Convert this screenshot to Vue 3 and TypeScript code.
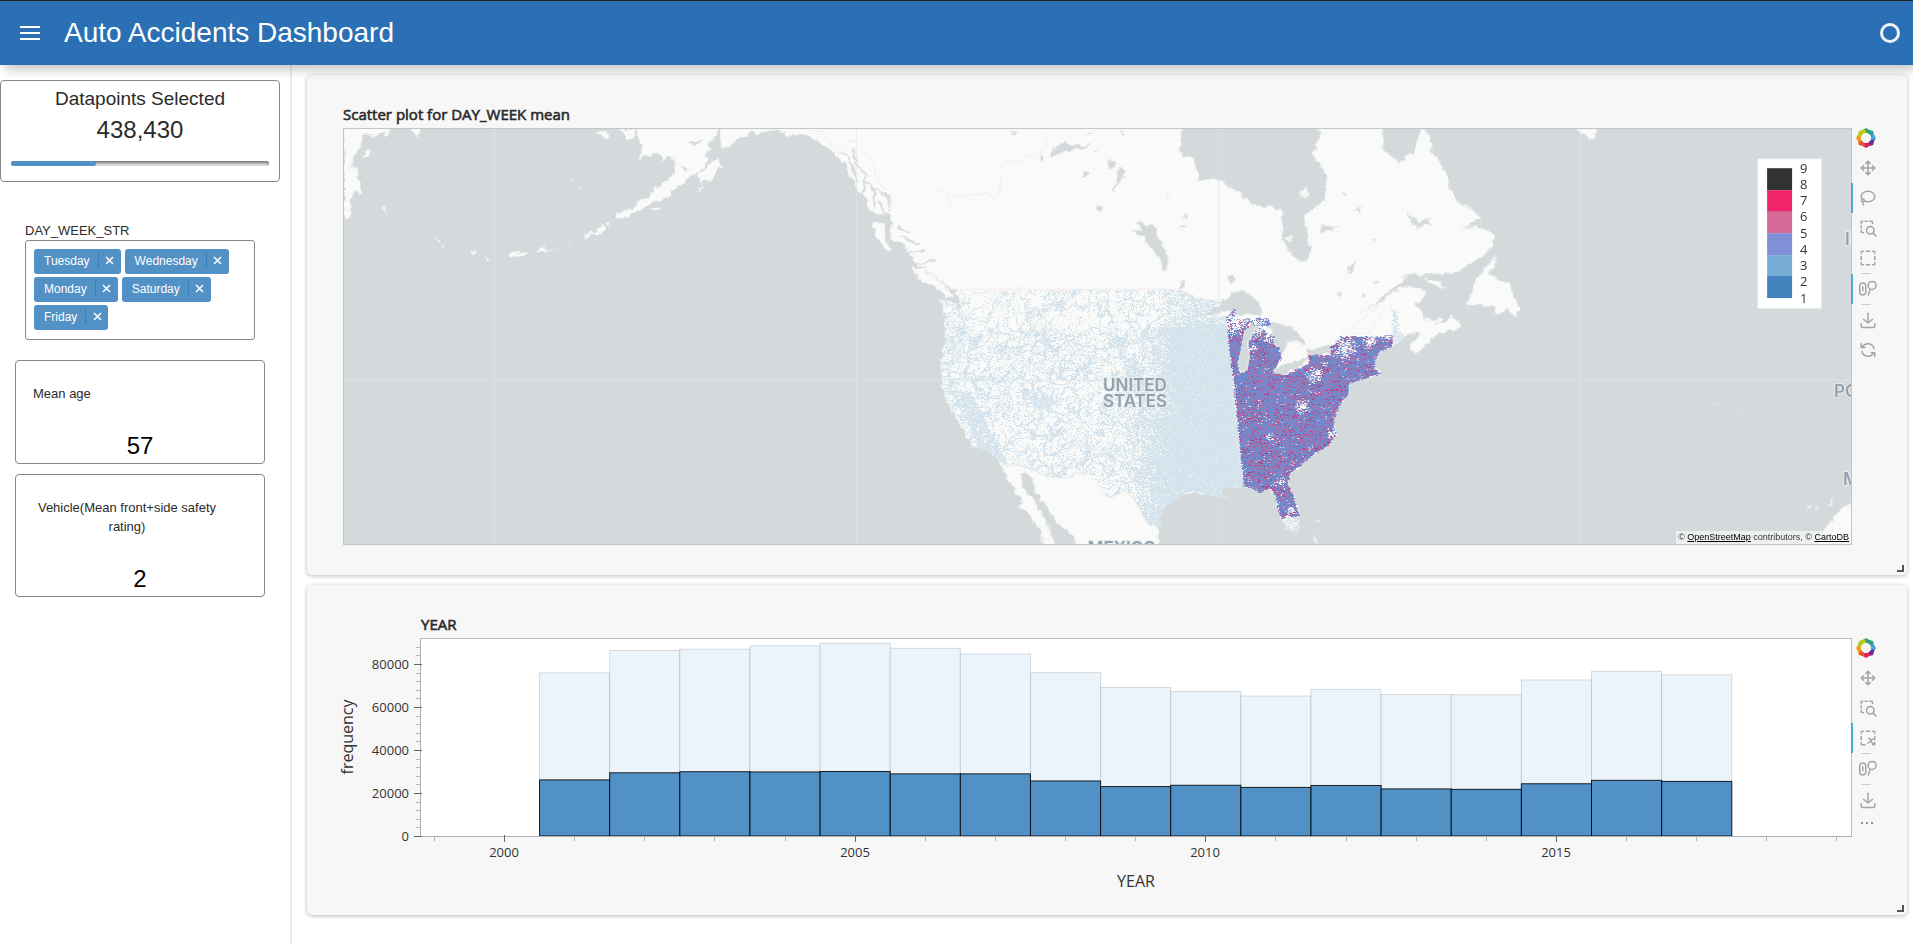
<script setup lang="ts">
import { onMounted, ref } from 'vue'

interface Tool { name: string; icon: string; active?: boolean; rule?: boolean }

const days = ref<string[]>(['Tuesday', 'Wednesday', 'Monday', 'Saturday', 'Friday'])
const removeDay = (day: string): void => { days.value = days.value.filter(d => d !== day) }

const icons: Record<string, string> = {
  pan: 'M18 9l3 3l-3 3M3 12h18M6 9l-3 3l3 3M9 18l3 3l3 -3M12 3v18M15 6l-3 -3l-3 3',
  lasso: 'M4 13.2C3.400 12.300 3 11.200 3 10c0-3.900 4-7 9-7s9 3.100 9 7s-4 7-9 7c-1.900 0-3.700-.5-5.100-1.300M5 13a2 2 0 1 0 0 4a2 2 0 1 0 0-4M5 17c0 1.400.3 2.800 1 4',
  boxZoom: 'M3 6V4a1 1 0 0 1 1-1h1M8 3h3M14 3h3a1 1 0 0 1 1 1v2M3 9v3M3 15v2a1 1 0 0 0 1 1h2M15 10a5 5 0 1 0 0 10a5 5 0 1 0 0-10M18.500 18.500L22.500 22.500',
  boxSelect: 'M3 6V4a1 1 0 0 1 1-1h2M10 3h4M18 3h2a1 1 0 0 1 1 1v2M21 10v4M21 18v2a1 1 0 0 1-1 1h-2M14 21h-4M6 21H4a1 1 0 0 1-1-1v-2M3 14v-4',
  xSelect: 'M3 6V4a1 1 0 0 1 1-1h2M10 3h4M18 3h2a1 1 0 0 1 1 1v2M21 10v4M21 18v2a1 1 0 0 1-1 1h-2M8 21H4a1 1 0 0 1-1-1v-2M3 14v-4M13 13q2-1 3 2l1 3q1 2 3 1M19 13l-7 6',
  wheelZoom: 'M1 8a4 4 0 0 1 8 0v8a4 4 0 0 1-8 0zM5 9v5M17.500 2a5 5 0 1 0 0 10.500a5 5 0 1 0 0-10.500M15 12l-2.500 8',
  save: 'M3 17v3a2 2 0 0 0 2 2h14a2 2 0 0 0 2-2v-3M6 11l6 5l6-5M12 3v13',
  reset: 'M20 10A8.400 8.400 0 0 0 4.500 8M3 3.500v5h5M4 14a8.400 8.400 0 0 0 15.500 2M21 20.500v-5h-5',
}

const mapTools: Tool[] = [
  { name: 'Pan', icon: 'pan' },
  { name: 'Lasso Select', icon: 'lasso', active: true },
  { name: 'Box Zoom', icon: 'boxZoom' },
  { name: 'Box Select', icon: 'boxSelect' },
  { name: 'Wheel Zoom', icon: 'wheelZoom', active: true, rule: true },
  { name: 'Save', icon: 'save', rule: true },
  { name: 'Reset', icon: 'reset' },
]
const yearTools: Tool[] = [
  { name: 'Pan', icon: 'pan' },
  { name: 'Box Zoom', icon: 'boxZoom' },
  { name: 'Box Select (x-axis)', icon: 'xSelect', active: true },
  { name: 'Wheel Zoom', icon: 'wheelZoom', rule: true },
  { name: 'Save', icon: 'save', rule: true },
]
const petals = ['#3fa34d', '#2f9e8f', '#43a6de', '#6f2c8b', '#e2205f', '#e4572e', '#f59c1c', '#b4cc22']

/* ---- histogram ---- */
const total = [75900, 86300, 86900, 88500, 89700, 87300, 84700, 76000, 69100, 67200, 65100, 68200, 65800, 65700, 72600, 76600, 75000]
const chosen = [26100, 29400, 29900, 29800, 30000, 28900, 28900, 25600, 23000, 23600, 22600, 23500, 21900, 21700, 24300, 25900, 25400]
const yearX = (year: number): number => 161.5 + (year - 2000) * 70.13
const freqY = (v: number): number => 236 - v * 0.00215
const majorY = [0, 20000, 40000, 60000, 80000]
const minorY = Array.from({ length: 23 }, (_, i) => i * 4000)
const majorX = [2000, 2005, 2010, 2015]
const minorX = Array.from({ length: 21 }, (_, i) => 1999 + i)

/* ---- map ---- */
const scale = ['#323232', '#f2246c', '#d66b98', '#8090d8', '#77acd6', '#4482be']

const aleutians = 'M107 140H220L212 168L203 174L206 150L180 166L168 158L150 172L147 200L126 232L121 264L142 268L136 296L147 322L143 347L132 326L118 365L122 405L107 412ZM150 234L158 212L172 206L168 220ZM197 376L206 384L212 404ZM228 400L239 410M725 154L757 158L752 174L738 172ZM780 146L818 146L815 172L803 176L792 160ZM268 146H292L285 168Z'
const alaska = 'M822 140L830 175L838 195L829 232L853 226L862 216L880 222L893 240L899 226L917 232L919 280L893 306L862 334L860 350L826 366L812 388L778 402L774 415L800 405L838 382L868 362L898 352L905 333L934 316L948 290L975 274L999 240L988 222L1003 206L999 186L1018 168L1024 140ZM975 288L990 272L1003 248L1022 236L1029 256L1016 272L1010 292L991 300L984 312ZM1036 140L1028 192L1041 204L1058 190L1070 172L1094 168L1098 150L1118 160L1130 150L1170 150L1196 165L1240 163L1270 180L1285 196L1306 218L1334 246L1342 282L1366 318L1370 338L1382 345L1397 388L1418 402L1440 396L1455 410L1452 440L1470 465L1482 494L1502 510L1505 545L1530 564L1568 596L1600 600V140ZM1402 430L1428 430L1430 478L1443 514L1421 484ZM695 475L706 456L718 458L704 472ZM718 460L740 434L748 445L734 460ZM512 518L552 518L548 526L514 526ZM575 512L592 498L595 508L611 510ZM329 475L342 480L336 484ZM420 520L430 513L424 522ZM448 530L464 536L460 540ZM750 430L760 424L758 432ZM862 382L880 384L870 390ZM974 326L986 320L978 328ZM666 296L671 299M678 322L685 324M620 501L626 503M656 490L662 488M346 496L352 498'
const mainland = 'M-20 80H690L686 150L695 168L718 170L725 200L735 243L770 235L800 250L830 280L850 300L880 320L905 318L932 330L937 370L935 415L950 445L968 470L985 488L1003 470L1008 440L998 400L990 345L1020 325L1040 295L1048 270L1046 225L1030 190L1008 165L1020 140L1030 110L1025 80H1180L1187 110L1183 145L1195 160L1210 175L1223 193L1245 170L1258 160L1265 130L1275 105L1283 85L1292 100L1302 125L1305 155L1320 180L1330 205L1342 235L1345 265L1360 290L1375 315L1395 325L1410 340L1423 352L1395 375L1370 398L1400 380L1430 385L1455 400L1455 440L1430 465L1400 485L1370 515L1330 520L1290 522L1240 522L1232 545L1205 565L1170 605L1120 650L1174 610L1205 575L1240 560L1275 562L1290 575L1285 595L1265 610L1277 640L1290 660L1315 675L1340 665L1350 645L1375 668L1370 685L1320 700L1295 725L1270 758L1256 755L1250 735L1265 715L1280 700L1262 695L1240 705L1232 715L1205 740L1175 760L1163 780L1165 800L1180 820L1165 828L1140 830L1100 850L1098 880L1085 905L1075 925L1060 960L1070 1000L1055 1030L1020 1055L990 1085L955 1120L950 1150L965 1190L978 1240L978 1290L965 1300L950 1285L935 1255L925 1225L922 1190L905 1165L880 1178L860 1160L800 1160L780 1175L800 1190L760 1185L720 1172L690 1180L660 1210L635 1240L632 1280V1340H435L425 1310L400 1285L375 1255L355 1210L330 1170L328 1140L310 1118L293 1120L300 1160L325 1200L345 1240L362 1275L378 1340H352L345 1290L325 1260L310 1240L285 1220L300 1205L280 1170L265 1135L245 1095L240 1075L210 1050L180 1040L165 1010L150 985L140 950L115 910L105 860L100 800L108 740L112 680L105 620L98 598L130 605L145 630L148 600L135 568L120 560L100 540L60 500L30 470L10 430L-20 420ZM25 500L55 505L85 530L110 555L132 590L115 590L80 560L45 535Z'
const atlantic = 'M255 505L285 470L290 480L270 520L300 545L330 550L340 580L350 600L358 625L345 652L335 635L325 625L285 645L290 620L240 615L205 615L200 605L215 580L235 530ZM75 538L100 536L140 562L120 562ZM78 650L105 662L130 658L122 668L95 670ZM536 84H592L590 103L572 115L560 103L540 98ZM1253 1340L1280 1290L1310 1245L1332 1220L1360 1211V1340ZM1224 1222L1238 1215L1230 1224ZM1285 1222L1304 1196L1296 1215ZM1248 1222L1258 1226L1254 1230ZM934 916L944 918L956 916M1007 940L1022 944M1215 1090L1228 1094M873 891L878 893'
const lakes = 'M745 650L770 620L805 592L830 570L855 578L870 600L885 615L885 650L850 640L830 650L812 632L790 640ZM885 675L860 672L840 690L833 740L826 790L835 818L850 810L856 770L854 725L868 695ZM895 668L940 672L965 685L985 712L996 738L975 722L950 722L946 745L938 765L928 740L915 735L915 705ZM915 812L940 792L1000 772L985 795L940 825L920 824ZM998 768L1000 752L1035 742L1060 728L1056 760L1030 768ZM365 165L378 145L400 125L430 136L466 136L466 142L430 146L400 155L372 172ZM605 380L620 362L635 420L656 468L655 508L645 514L640 480L606 432L600 408L572 398L570 390L592 392L580 365L590 362ZM512 184L522 176L527 190L514 208ZM540 198L553 210L545 240L522 275L519 268L532 248L530 222ZM443 232L450 216L463 214L460 226ZM480 320L497 318L488 334ZM688 358L706 340L704 350ZM684 376L704 380L690 386ZM803 528L812 520L820 542L810 552ZM340 166L352 172L348 186ZM1098 528L1100 500L1118 480L1112 500ZM1028 385L1048 372L1052 380L1082 374L1060 385L1062 396L1046 390L1030 400ZM1242 328L1248 345L1270 365L1280 362L1300 350L1292 366L1312 372L1290 378L1272 376L1270 394L1262 372L1246 355ZM460 110L466 94L470 100ZM540 86L548 102L542 106ZM270 95L286 92L278 102ZM330 822L346 850L338 850ZM690 540L698 560L684 568ZM1160 545L1176 542L1168 554ZM1082 274L1098 286L1090 290ZM1106 334L1130 320L1126 330ZM1158 414L1166 418L1162 424ZM655 280L662 284L656 288ZM470 152L486 142L480 150ZM1070 584L1084 578L1082 588ZM1130 578L1142 582L1136 592Z'
const isles = 'M978 290L985 268L998 262L1003 278L992 292ZM940 412L950 404L964 414L955 424ZM1005 1264L1030 1260L1036 1284L1032 1268ZM1014 1300L1022 1322L1018 1328ZM1056 1320L1072 1328'

const west = 'M140 568H690L720 590L750 598L785 602L745 650L800 645L805 730L842 1160H800L780 1175L800 1190L760 1185L720 1172L690 1180L660 1210L635 1240L640 1280L605 1272L570 1192L552 1176L530 1182L520 1195L500 1185L490 1155L460 1120H425L420 1132H365L295 1098H250L240 1075L210 1050L180 1040L165 1010L150 985L140 950L115 910L105 860L100 800L108 740L112 680L105 620L98 598L130 605L145 630Z'
const maine = 'M1206 740L1206 640L1200 625L1218 628L1224 690L1238 712ZM936 1250H976L980 1285L972 1305L958 1300L945 1280Z'
const east = 'M799 650L818 625L824 640L815 655L850 655L898 652L912 674L885 682L900 700L915 705V735L928 740L933 775L912 815L940 825L965 812L1000 792V764H1055L1054 740L1080 708H1170L1206 700V740L1175 752L1163 780L1162 805L1180 820L1140 832L1100 850L1098 880L1080 910L1065 950L1062 985L1070 1000L1050 1035L1020 1055L990 1085L955 1120L950 1150L965 1190L978 1248L944 1246L943 1256L932 1252L925 1225L922 1190L905 1162L880 1178L860 1160L842 1158L818 860L806 740Z'
const lakeMichigan = 'M885 675L860 676L842 690L835 740L826 790L832 818L850 810L856 770L854 725L868 695Z'

const dots = ref<HTMLCanvasElement | null>(null)

function hash(x: number, y: number, seed: number): number {
  let h = Math.imul(x, 374761393) + Math.imul(y, 668265263) + Math.imul(seed, 974634777)
  h = Math.imul(h ^ (h >>> 13), 1274126177)
  h = Math.imul(h ^ (h >>> 15), 2246822519)
  return ((h ^ (h >>> 16)) >>> 0) / 4294967296
}
function noise(x: number, y: number, seed: number): number {
  const xi = Math.floor(x), yi = Math.floor(y)
  const fx = x - xi, fy = y - yi
  const u = fx * fx * (3 - 2 * fx), v = fy * fy * (3 - 2 * fy)
  const a = hash(xi, yi, seed), b = hash(xi + 1, yi, seed)
  const c = hash(xi, yi + 1, seed), d = hash(xi + 1, yi + 1, seed)
  return a + (b - a) * u + (c - a) * v + (a - b - c + d) * u * v
}

function westDensity(px: number, py: number, bx: number, by: number): number {
  const warp = noise(px / 9, py / 9, 4) * 9
  const road = (size: number, seed: number, width: number): boolean =>
    Math.abs(noise((px + warp) / size, (py - warp) / size, seed) - 0.5) < width
  let d = 0.06 + noise(px / 14, py / 14, 9) ** 2 * 0.3 + noise(px / 5, py / 5, 14) ** 4 * 0.6
  if (road(20, 1, 0.03) || road(13, 2, 0.036) || road(9, 3, 0.034)) d = Math.max(d, 0.9)
  const start = by > 950 ? 530 : by < 680 ? 620 : 570
  d += Math.max(0, Math.min(0.92, (bx - start) / 140))
  const plains = noise(px / 11, py / 11, 40)
  if (by < 690 && plains < 0.6) d -= 0.2
  if (bx < 155 && by < 800) d += 0.4 * noise(px / 8, py / 8, 5)
  const valley = Math.abs((by - 880) * 0.42 - (bx - 150))
  if (by > 870 && by < 1090 && valley < 24) d += 0.8
  return Math.min(0.86 + 0.12 * Math.min(1, Math.max(0, (bx - 560) / 110)) - (by < 670 ? 0.22 : 0), d)
}

const gaps: [number, number, number][] = [[1088, 742, 18], [1016, 826, 12], [985, 918, 11], [930, 1146, 8], [820, 665, 22], [868, 668, 22], [1150, 722, 12], [1190, 690, 16], [902, 712, 8], [905, 1010, 6], [960, 1230, 7], [864, 742, 6], [1060, 1005, 8], [1040, 790, 5]]

onMounted(() => {
  const canvas = dots.value
  const ctx = canvas?.getContext('2d')
  if (!canvas || !ctx) return
  const areaWest = new Path2D(west)
  const areaPale = new Path2D(maine)
  const areaEast = new Path2D(east)
  const lake = new Path2D(lakeMichigan)
  const colours = ['#6f8cd1', '#b567a0', '#c32d78', '#5a98cf']
  for (let py = 150; py < 417; py++) {
    for (let px = 592; px < 1085; px++) {
      const bx = (px - 557) * 2.45
      const by = (py + 28) * 3
      const r = hash(px, py, 7)
      const jx = bx + (hash(px, py, 21) - 0.5) * 5
      const jy = by + (hash(px, py, 22) - 0.5) * 5
      if (ctx.isPointInPath(areaEast, jx, jy) && !ctx.isPointInPath(lake, bx, by)) {
        let keep = 0.95 + noise(px / 5, py / 5, 12) * 0.08
        for (const [gx, gy, gr] of gaps) {
          const dist = Math.hypot(bx - gx, (by - gy) * 0.82) / gr
          if (dist < 2) keep = Math.min(keep, 0.16 + dist * 0.42)
        }
        if (r > keep) continue
        const k = hash(px, py, 8) + (noise(px / 8, py / 8, 30) - 0.5) * 0.45
        ctx.fillStyle = k < 0.6 ? colours[0] : k < 0.87 ? colours[1] : k < 0.96 ? colours[2] : colours[3]
        ctx.fillRect(px, py, 1, 1)
      } else if (ctx.isPointInPath(areaWest, jx, jy) && r < westDensity(px, py, bx, by)) {
        ctx.fillStyle = '#d5e3ed'
        ctx.fillRect(px, py, 1, 1)
      } else if (ctx.isPointInPath(areaPale, jx, jy) && r < 0.55) {
        ctx.fillStyle = '#d0dfeb'
        ctx.fillRect(px, py, 1, 1)
      }
    }
  }
})
</script>

<template>
  <div class="app">
    <header class="bar">
      <button class="menu" type="button" aria-label="Toggle sidebar"><span></span><span></span><span></span></button>
      <h1>Auto Accidents Dashboard</h1>
      <span class="busy" role="status" aria-label="Idle"></span>
    </header>

    <div class="body">
      <aside class="side">
        <section class="count">
          <h2>Datapoints Selected</h2>
          <strong>438,430</strong>
          <div class="track"><div class="fill"></div></div>
        </section>

        <section class="filter" aria-labelledby="day-label">
          <h3 id="day-label">DAY_WEEK_STR</h3>
          <div class="chips">
            <span v-for="day in days" :key="day" class="chip">
              {{ day }}<button type="button" :aria-label="'Remove ' + day" @click="removeDay(day)">
                <svg viewBox="0 0 9 9" width="9" height="9"><path d="M1 1L8 8M8 1L1 8" /></svg>
              </button>
            </span>
          </div>
        </section>

        <section class="stat">
          <p class="name left">Mean age</p>
          <p class="value">57</p>
        </section>
        <section class="stat">
          <p class="name">Vehicle(Mean front+side safety rating)</p>
          <p class="value">2</p>
        </section>
      </aside>

      <main class="main">
        <section class="card">
          <div class="figure">
            <h2 class="title">Scatter plot for DAY_WEEK mean</h2>
            <div class="map">
              <svg viewBox="0 0 1509 417" preserveAspectRatio="xMaxYMid slice" aria-hidden="true">
                <defs>
                  <filter id="coast" x="0" y="0" width="1509" height="417" filterUnits="userSpaceOnUse">
                    <feTurbulence type="fractalNoise" baseFrequency="0.16" numOctaves="2" seed="3" />
                    <feDisplacementMap in="SourceGraphic" scale="7" xChannelSelector="R" yChannelSelector="G" />
                  </filter>
                </defs>
                <rect width="1509" height="417" fill="#d4dadc" />
                <g filter="url(#coast)">
                  <g fill="#fafaf8" stroke="#fafaf8">
                    <g transform="translate(-43 -48) scale(.40816 .33333)"><path :d="aleutians" /><path :d="alaska" stroke-width="3" /></g>
                    <g transform="translate(557 -28) scale(.40816 .33333)"><path :d="mainland" /></g>
                    <g transform="translate(1057 -28) scale(.33333)"><path :d="atlantic" /></g>
                  </g>
                  <g transform="translate(557 -28) scale(.40816 .33333)">
                    <path :d="lakes" fill="#d4dadc" />
                    <path :d="isles" fill="#f3f4f3" />
                    <path class="river" d="M338 86L358 110V150L340 155L290 182H262L246 210V265L235 290L200 280L150 285H112L96 258M112 285L128 320M350 700L345 640L370 610L430 618L510 600L555 620L575 680L580 730L620 770L660 800L670 880L720 910L775 912L798 970L780 1020L755 1060L765 1140M1055 725L1110 680L1180 610" />
                    <path class="border" d="M145 568H690L720 592L750 600H785M1094 702L1150 700L1165 670L1190 626M250 1096H295L365 1130H425V1120H460L500 1185L520 1195L535 1176L570 1190L605 1270L635 1280" />
                  </g>
                  <g transform="translate(-43 -48) scale(.40816 .33333)">
                    <path class="border" d="M1243 150L1282 152L1284 170L1316 220L1340 182L1356 178L1394 230L1425 318L1464 350" />
                    <path class="strait" d="M1322 215L1345 235L1368 310M1355 205L1362 250L1385 285L1378 340M1388 300L1405 330L1408 385M1400 320L1440 350L1444 390M1420 365L1432 400M1460 440L1492 455M1470 470L1515 492M1495 515L1530 510M1515 550L1560 540" />
                    <path d="M950 190L985 180L978 192L956 196ZM930 256L950 266L944 274Z" fill="#d4dadc" />
                  </g>
                </g>
                <path class="seams" d="M151 0V417M513 0V417M876 0V417M1238 0V417M0 252H1509" />
              </svg>
              <canvas ref="dots" width="1509" height="417"></canvas>
              <svg viewBox="0 0 1509 417" preserveAspectRatio="xMaxYMid slice" role="img" aria-label="Map of accidents coloured by mean day of week">
                <g class="place">
                  <text x="792" y="263" text-anchor="middle">UNITED</text>
                  <text x="792" y="279" text-anchor="middle">STATES</text>
                  <text x="779" y="426" text-anchor="middle">MEXICO</text>
                  <text x="1503" y="117">IRELAND</text>
                  <text x="1492" y="269">PORTUGAL</text>
                  <text x="1501" y="357">MOROCCO</text>
                </g>
                <rect x="1415" y="30" width="65" height="151" fill="#e5e8e9" />
                <rect x="1416" y="31" width="63" height="149" fill="#fff" />
                <rect v-for="(c, i) in scale" :key="c" x="1425" :y="Math.round(40 + i * 21.67)" width="25" height="22" :fill="c" />
                <text v-for="n in 9" :key="n" class="tick" x="1458" :y="Math.round(44.5 + (9 - n) * 16.25)">{{ n }}</text>
              </svg>
              <p class="credit">© <a href="#osm">OpenStreetMap</a> contributors, © <a href="#carto">CartoDB</a></p>
            </div>
          </div>
          <div class="tools" role="toolbar" aria-label="Map tools">
            <svg class="logo" viewBox="-10 -10 20 20" aria-hidden="true">
              <path v-for="(p, i) in petals" :key="p" :fill="p" :transform="`rotate(${i * 45})`" d="M-5 -7L0 -10L5 -7L4.500 -3.500L1.500 -5L-2.500 -5Z" />
            </svg>
            <template v-for="tool in mapTools" :key="tool.name">
              <i v-if="tool.rule" class="rule"></i>
              <button type="button" :class="{ active: tool.active }" :aria-label="tool.name">
                <svg viewBox="0 0 24 24"><path :d="icons[tool.icon]" /></svg>
              </button>
            </template>
          </div>
          <i class="grip"></i>
        </section>

        <section class="card">
          <div class="figure">
            <svg class="chart" viewBox="0 0 1509 272" role="img" aria-label="Accident frequency by year">
              <g transform="translate(0 -13)">
                <text class="heading" x="78" y="30">YEAR</text>
                <rect x="77.500" y="38.500" width="1431" height="198" fill="#fff" stroke="#bdbdbd" />
                <g class="all">
                  <rect v-for="(v, i) in total" :key="i" :x="yearX(2000.5 + i)" :y="freqY(v)" width="70.130" :height="236 - freqY(v)" />
                </g>
                <g class="picked">
                  <rect v-for="(v, i) in chosen" :key="i" :x="yearX(2000.5 + i)" :y="freqY(v)" width="70.130" :height="236 - freqY(v)" />
                </g>
                <path d="M77.500 38V237M77 236.500H1509" stroke="#b0b0b0" fill="none" />
                <g class="minor">
                  <path v-for="v in minorY" :key="v" :d="`M73 ${Math.round(freqY(v)) + 0.5}h4`" />
                  <path v-for="y in minorX" :key="y" :d="`M${Math.floor(yearX(y)) + 0.5} 237v4`" />
                </g>
                <g class="major">
                  <path v-for="v in majorY" :key="v" :d="`M71 ${Math.round(freqY(v)) + 0.5}h8`" />
                  <path v-for="y in majorX" :key="y" :d="`M${Math.floor(yearX(y)) + 0.5} 235v7`" />
                </g>
                <text v-for="v in majorY" :key="v" class="tick" x="66" :y="Math.round(freqY(v)) + 5" text-anchor="end">{{ v }}</text>
                <text v-for="y in majorX" :key="y" class="tick" :x="Math.floor(yearX(y))" y="257" text-anchor="middle">{{ y }}</text>
                <text class="axis" x="793" y="287" text-anchor="middle">YEAR</text>
                <text class="axis" transform="translate(10 137) rotate(-90)" text-anchor="middle">frequency</text>
              </g>
            </svg>
          </div>
          <div class="tools" role="toolbar" aria-label="Histogram tools">
            <svg class="logo" viewBox="-10 -10 20 20" aria-hidden="true">
              <path v-for="(p, i) in petals" :key="p" :fill="p" :transform="`rotate(${i * 45})`" d="M-5 -7L0 -10L5 -7L4.500 -3.500L1.500 -5L-2.500 -5Z" />
            </svg>
            <template v-for="tool in yearTools" :key="tool.name">
              <i v-if="tool.rule" class="rule"></i>
              <button type="button" :class="{ active: tool.active }" :aria-label="tool.name">
                <svg viewBox="0 0 24 24"><path :d="icons[tool.icon]" /></svg>
              </button>
            </template>
            <button class="more" type="button" aria-label="More tools"><span></span><span></span><span></span></button>
          </div>
          <i class="grip"></i>
        </section>
      </main>
    </div>
  </div>
</template>

<style>
body { margin: 0; background: #fff; }
</style>

<style scoped>
* { box-sizing: border-box; }
.app { min-height: 100vh; display: flex; flex-direction: column; font-family: "Liberation Sans", Arial, sans-serif; color: #2b2b2b; }
h1, h2, h3, p { margin: 0; font-weight: 400; }
button { border: 0; padding: 0; background: none; cursor: pointer; }

.bar { position: relative; z-index: 2; height: 65px; display: flex; align-items: center; padding: 0 13px 0 20px; border-top: 1px solid #212529; background: #2b70b4; color: #fff; box-shadow: 5px 5px 10px rgba(0, 0, 0, .22); }
.menu { width: 20px; display: flex; flex-direction: column; gap: 4px; margin-right: 24px; }
.menu span { height: 2px; background: #fff; }
.bar h1 { flex: 1; font-size: 28px; line-height: 34px; }
.busy { width: 20px; height: 20px; border: 3px solid #eef2f6; border-radius: 50%; }

.body { flex: 1; display: flex; }
.side { flex: none; width: 292px; border-right: 2px solid #ebebeb; padding-top: 15px; }
.count { width: 280px; height: 102px; padding: 7px 10px; border: 1px solid #888; border-radius: 4px; text-align: center; }
.count h2 { font-size: 19px; line-height: 22px; }
.count strong { display: block; margin-top: 5px; font-size: 24px; line-height: 30px; font-weight: 400; }
.track { height: 5px; margin-top: 16px; border-radius: 3px; background: #e2e2e2; box-shadow: inset 0 2px 3px rgba(0, 0, 0, .5); }
.fill { width: 33%; height: 5px; border-radius: 3px; background: #5291c5; }
.filter { width: 230px; margin: 40px 0 20px 25px; }
.filter h3 { font-size: 13px; line-height: 18px; }
.chips { display: flex; flex-wrap: wrap; gap: 3px 4px; min-height: 100px; padding: 8px; border: 1px solid #888; border-radius: 3px; align-content: flex-start; }
.chip { display: flex; align-items: center; height: 25px; padding: 0 0 2px 10px; border-radius: 3px; background: #5291c5; color: #fff; font-size: 12px; }
.chip button { display: flex; justify-content: center; width: 23px; height: 15px; margin-left: 8px; align-items: center; border-left: 1px solid #3a7cb8; }
.chip svg { stroke: #fff; stroke-width: 1.5; fill: none; }
.stat { width: 250px; margin: 0 0 10px 15px; padding: 23px 17px 2px; border: 1px solid #888; border-radius: 4px; }
.name { width: 188px; font-size: 13px; line-height: 19px; text-align: center; }
.left { text-align: left; }
.value { margin-top: 27px; font-size: 24px; line-height: 31px; color: #000; text-align: center; }

.main { flex: 1; min-width: 0; display: flex; flex-direction: column; gap: 10px; padding: 10px 6px 29px 15px; }
.card { position: relative; display: flex; align-items: flex-start; padding: 28px 24px 30px 36px; border-radius: 5px; background: #f7f7f7; box-shadow: 0 1px 4px rgba(0, 0, 0, .28); }
.figure { flex: 1; min-width: 0; }
.title { height: 25px; font: 15px/22px "Open Sans", sans-serif; -webkit-text-stroke: 0.6px #2b2b2b; }
.map { position: relative; height: 417px; overflow: hidden; border: 1px solid #c3c6c7; }
.map svg, .map canvas { position: absolute; inset: 0; width: 100%; height: 100%; object-fit: cover; object-position: right center; }
.river, .border, .strait { fill: none; stroke-width: 2; }
.river { stroke: #e6e8e9; }
.border { stroke: #f3e6e6; }
.strait { stroke: #d4dadc; stroke-width: 5; }
.seams { stroke: #e1e5e6; fill: none; opacity: .6; }
.place { font: 600 17px Inter, sans-serif; fill: #94a1ac; stroke: #e6ebee; stroke-width: 2px; paint-order: stroke; }
.tick { font: 13px "Open Sans", sans-serif; fill: #333; }
.axis { font: 16px "Open Sans", sans-serif; fill: #333; }
.heading { font: 15px "Open Sans", sans-serif; fill: #2b2b2b; stroke: #2b2b2b; stroke-width: 0.6px; }
.credit { position: absolute; right: 0; bottom: 0; padding: 0 2px; background: rgba(247, 247, 247, .75); font-size: 9px; line-height: 13px; color: #333; }
.credit a { color: #000; text-decoration: underline; }

.chart { display: block; width: 100%; height: auto; overflow: visible; }
.all rect { fill: #ebf3fb; stroke: #000; stroke-opacity: .13; }
.picked rect { fill: #5291c5; stroke: #000; stroke-opacity: .85; }
.minor path { stroke: #b5b5b5; }
.major path { stroke: #666; }

.tools { position: relative; z-index: 1; flex: none; width: 32px; margin: 25px 0 0 -1px; display: flex; flex-direction: column; }
.logo { width: 20px; height: 20px; margin: 0 0 5px 5px; }
.tools button { width: 32px; height: 30px; display: flex; align-items: center; justify-content: center; border-left: 2px solid transparent; }
.tools button.active { border-left-color: #48a9df; }
.tools button svg { width: 18px; height: 18px; fill: none; stroke: #a1a6a9; stroke-width: 2; stroke-linecap: round; stroke-linejoin: round; }
.rule { width: 10px; height: 1px; margin-left: 10px; background: #ccc; }
.tools .more { height: 16px; gap: 3px; justify-content: flex-start; padding-left: 8px; }
.more span { width: 2px; height: 2px; background: #8f9396; }
.grip { position: absolute; right: 3px; bottom: 3px; width: 7px; height: 7px; border-right: 2px solid #555; border-bottom: 2px solid #555; }
</style>
